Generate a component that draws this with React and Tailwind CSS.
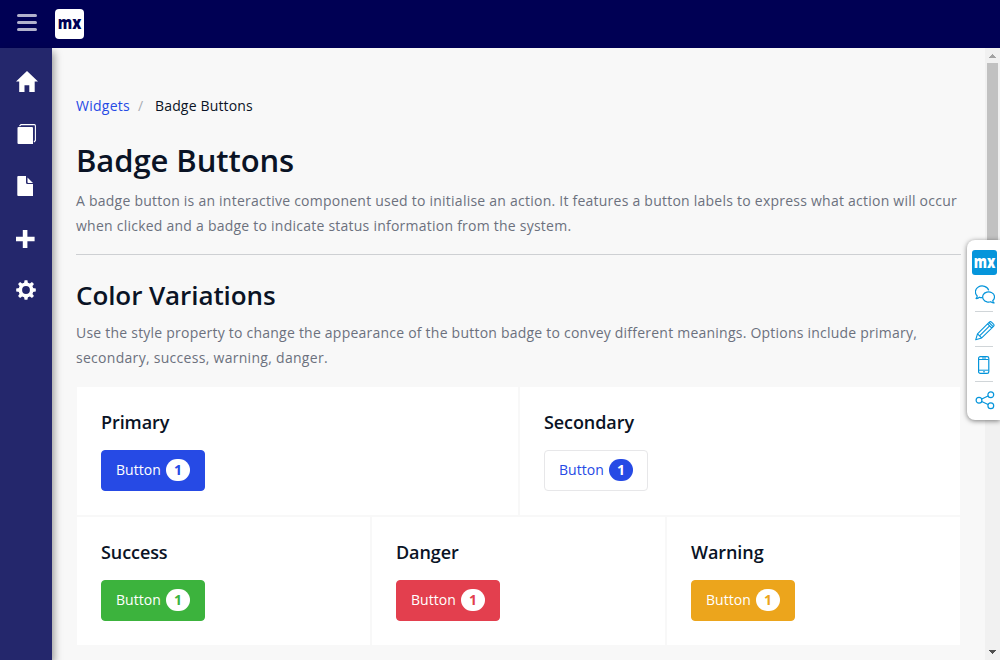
import React from "react";

const navIcons = [
  {
    name: "Home",
    box: "mb-[2px] h-[21px] w-[22px]",
    view: "0 0 22 21",
    path: <path d="M11 0 L22 10.5 H18.7 V21 H13.3 V14.2 H8.5 V21 H3.2 V10.5 H0 Z" />,
  },
  {
    name: "Layouts",
    box: "ml-px h-[20px] w-[20px]",
    view: "0 0 20 20",
    path: (
      <>
        <path d="M1.5 3 H15 Q16 3 16 4 V20 H1.5 Q0.5 20 0.5 19 V4 Q0.5 3 1.5 3 Z" />
        <path d="M2.5 2 L4 0.6 H17.3 Q18.4 0.6 18.4 1.7 V16.5 L17 18" fill="none" stroke="#fff" strokeWidth="1.1" />
      </>
    ),
  },
  {
    name: "Page",
    box: "ml-px h-[20px] w-[20px]",
    view: "0 0 20 20",
    path: <path d="M1.2 0 H9 V6.5 Q9 8 10.5 8 H16 V20 H1.2 Q0.3 20 0.3 19 V1 Q0.3 0 1.2 0 Z M10.5 1.5 L16 7 H11.2 Q10.5 7 10.5 6.3 Z" />,
  },
  {
    name: "Add",
    box: "mt-[2px] h-[18px] w-[22px]",
    view: "0 0 22 18",
    path: <path d="M6.8 0 H11.4 V6.7 H18.6 V11.3 H11.4 V18 H6.8 V11.3 H0 V6.7 H6.8 Z" />,
  },
  {
    name: "Settings",
    box: "h-[20px] w-[20px]",
    view: "0 0 20 20",
    path: (
      <>
        <circle cx="10" cy="10" r="5.7" fill="none" stroke="#fff" strokeWidth="3.6" />
        <g>
          {[0, 45, 90, 135, 180, 225, 270, 315].map((a) => (
            <path key={a} d="M8 3.5 L8.6 0.2 H11.4 L12 3.5 Z" transform={`rotate(${a} 10 10)`} />
          ))}
        </g>
      </>
    ),
  },
];

function BadgeButton({ button, badge }) {
  return (
    <button className={`flex h-[41px] w-[104px] items-start rounded-[4px] border pl-[14px] pt-[8px] text-[14px] ${button}`}>
      <span className="w-[50px] text-left leading-[22px] tracking-[0.05px]">Button</span>
      <span className={`h-[22px] w-6 rounded-[11px] text-center text-[14px] font-bold leading-[22px] ${badge}`}>1</span>
    </button>
  );
}

function Card({ title, button, badge, size = "flex-1" }) {
  return (
    <div className={`h-[130px] min-w-0 border border-[#f8f8f8] bg-white p-6 ${size}`}>
      <h3 className="mb-4 h-[23px] text-[18px] font-semibold leading-[23px] tracking-[-0.08px]">{title}</h3>
      <BadgeButton button={button} badge={badge} />
    </div>
  );
}

function Mark({ className, width, height }) {
  return (
    <svg width={width} height={height} viewBox="0 0 24 12" preserveAspectRatio="none" className={`overflow-visible ${className}`}>
      <text x="-0.3" y="11" textLength="24.6" lengthAdjust="spacingAndGlyphs" fontSize="18" fontWeight="800" fontFamily="Open Sans, sans-serif">
        mx
      </text>
    </svg>
  );
}

function ToolPanel() {
  return (
    <div className="absolute left-[967px] top-[240px] flex h-[180px] w-[33px] flex-col rounded-l-[8px] bg-white pl-[5px] pt-[10px] shadow-[0_1px_5px_rgba(0,0,0,0.5)]">
      <div className="flex h-[25px] w-[25px] items-center justify-center rounded-[3px] bg-[#0595db]">
        <Mark className="fill-white" width={21} height={12} />
      </div>
      <div className="flex w-[24px] flex-col items-center">
        <svg className="ml-[2px] mt-[10px] h-[20px] w-[20px]" viewBox="0 0 20 20" fill="none" stroke="#0595db" strokeWidth="1.2" strokeLinejoin="round">
          <path d="M7.7 12.6 C6.5 12.8 5.5 12.7 4.5 12.2 C3.4 13.4 2.3 13.7 1 13.5 C2 12.7 2.2 12 2.2 11 C-0.7 8.1 0.1 3.8 3.3 2 C7 -0.2 12.8 1.3 13.7 5.4" />
          <path d="M17.7 15.8 C20.4 13.3 20 9.2 16.9 7.7 C13.7 6 9.5 7 8.2 9.8 C6.7 12.9 8.7 16 12 16.9 C13.3 17.2 14.6 17.1 15.7 16.7 C16.7 17.8 17.8 18.2 19.2 17.9 C18.2 17.3 17.8 16.6 17.7 15.8 Z" />
        </svg>
        <i className="mt-[6px] mb-[9px] h-px w-[18px] bg-[#d0d5d8]" />
        <svg className="ml-[2px] h-[20px] w-[20px]" viewBox="0 0 20 20" fill="none" stroke="#0595db" strokeWidth="1.1" strokeLinejoin="round">
          <path d="M.7 18.8 L2.5 12.8 L14.3 1.1 Q15.4 .1 16.5 1.1 L18.5 3.1 Q19.6 4.2 18.5 5.3 L6.7 16.9 Z M2.5 12.8 L6.7 16.9 M12.6 2.8 L16.8 7 M14 1.5 L18.2 5.7 M4.8 14.6 L14.6 4.8" />
        </svg>
        <i className="mt-[5px] mb-[9px] h-px w-[18px] bg-[#d0d5d8]" />
        <svg className="h-[18px] w-[12px]" viewBox="0 0 12 18" fill="none" stroke="#0595db">
          <rect x=".6" y=".6" width="10.2" height="16.8" rx="1.7" strokeWidth="1.2" />
          <path d="M1 3.5 H10.5 M1 14.2 H10.5 M4 2 H8 M5 15.8 H7" />
        </svg>
        <i className="mt-[7px] mb-[9px] h-px w-[18px] bg-[#d0d5d8]" />
        <svg className="ml-[2px] h-[19px] w-[20px]" viewBox="0 0 20 19" fill="none" stroke="#0595db" strokeWidth="1.2">
          <circle cx="4" cy="9.2" r="2.9" />
          <circle cx="15.8" cy="3.8" r="2.9" />
          <circle cx="15.8" cy="14.8" r="2.9" />
          <path d="M6.7 8 L13.1 5 M6.7 10.5 L13.1 13.5" />
        </svg>
      </div>
    </div>
  );
}

export default function App() {
  return (
    <div className="relative flex h-[660px] w-[1000px] flex-col overflow-hidden bg-[#f8f8f8] font-['Open_Sans',sans-serif] text-[14px] text-[#0a1325]">
      <header className="flex h-12 shrink-0 items-start bg-[#000054]">
        <div className="ml-[17px] mt-[14.4px] flex w-[20px] flex-col gap-[4px]">
          <i className="h-[3px] rounded-full bg-[#b1b1cc]" />
          <i className="h-[3px] rounded-full bg-[#b1b1cc]" />
          <i className="h-[3px] rounded-full bg-[#b1b1cc]" />
        </div>
        <div className="ml-[18px] mt-[9px] flex h-[30px] w-[29px] items-center justify-center rounded-[4px] bg-white">
          <Mark className="fill-[#000054]" width={23} height={12} />
        </div>
      </header>
      <div className="flex min-h-0 flex-1">
        <nav className="z-10 flex w-[52px] shrink-0 flex-col bg-[#24276c] pt-[8px] shadow-[2px_4px_8px_rgba(0,0,0,0.4)]">
          {navIcons.map((n) => (
            <div key={n.name} className="flex h-[52px] items-center pl-4">
              <svg className={n.box} viewBox={n.view} fill="#fff">
                {n.path}
              </svg>
            </div>
          ))}
        </nav>
        <main className="flex-1 pl-6 pr-6">
          <div className="mt-[48px] flex h-5 items-center leading-5">
            <span className="w-[62px] tracking-[0.25px] text-[#264ae5]">Widgets</span>
            <span className="w-[17px] text-[#a9acb3]">/</span>
            <span className="tracking-[0.16px]">Badge Buttons</span>
          </div>
          <h1 className="mt-[24px] h-[40px] text-[31px] font-semibold leading-[40px] tracking-[-0.08px]">Badge Buttons</h1>
          <p className="mt-[8px] whitespace-nowrap leading-[25px] tracking-[0.237px] text-[#6c717e]">
            A badge button is an interactive component used to initialise an action. It features a button labels to express what action will occur
            <br />
            when clicked and a badge to indicate status information from the system.
          </p>
          <hr className="mt-[16px] border-[#ced0d3]" />
          <h2 className="mt-[24px] h-[33px] text-[26px] font-semibold leading-[33px] tracking-[-0.08px]">Color Variations</h2>
          <p className="mt-[8px] whitespace-nowrap leading-[25px] tracking-[0.225px] text-[#6c717e]">
            Use the style property to change the appearance of the button badge to convey different meanings. Options include primary,
            <br />
            <span className="tracking-[0.29px]">secondary, success, warning, danger.</span>
          </p>
          <section className="mt-[16px]">
            <div className="flex">
              <Card title="Primary" size="w-[443px]" button="border-[#264ae5] bg-[#264ae5] text-white" badge="bg-white text-[#264ae5]" />
              <Card title="Secondary" button="border-[#e7e7e9] bg-white text-[#264ae5]" badge="bg-[#264ae5] text-white" />
            </div>
            <div className="flex">
              <Card title="Success" button="border-[#3cb33d] bg-[#3cb33d] text-white" badge="bg-white text-[#3cb33d]" />
              <Card title="Danger" button="border-[#e33f4e] bg-[#e33f4e] text-white" badge="bg-white text-[#e33f4e]" />
              <Card title="Warning" button="border-[#eca51c] bg-[#eca51c] text-white" badge="bg-white text-[#eca51c]" />
            </div>
          </section>
        </main>
        <div className="flex w-[15px] shrink-0 flex-col items-center bg-[#f1f1f1]">
          <svg className="h-[15px] w-[15px]" viewBox="0 0 15 15" fill="#a3a3a3" shapeRendering="crispEdges">
            <path d="M4 10 L7.5 6 L11 10 Z" />
          </svg>
          <div className="h-[250px] w-[11px] bg-[#c1c1c1]" />
          <svg className="mt-auto h-[15px] w-[15px]" viewBox="0 0 15 15" fill="#505050" shapeRendering="crispEdges">
            <path d="M4 5 H11 L7.5 9 Z" />
          </svg>
        </div>
      </div>
      <ToolPanel />
    </div>
  );
}
